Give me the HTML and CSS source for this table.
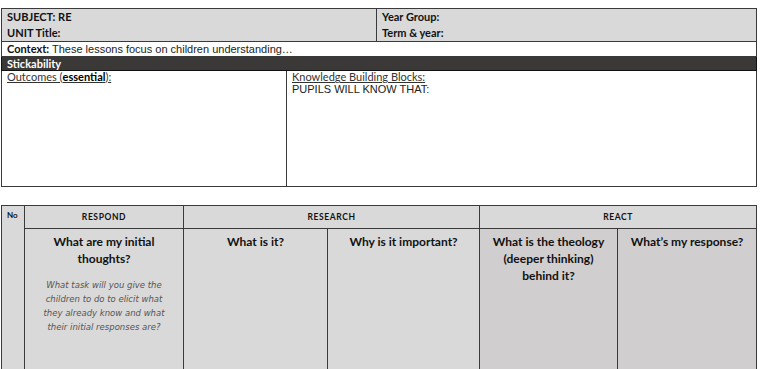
FILE: index.html
```html
<!DOCTYPE html>
<html>
<head>
<meta charset="utf-8">
<link rel="stylesheet" href="styles.css">
</head>
<body>
<div class="page">
  <table class="plan">
    <colgroup><col class="c-left"><col class="c-mid"><col class="c-right"></colgroup>
    <tr class="head-row">
      <td colspan="2" class="gt">
        <div class="b">SUBJECT: RE</div>
        <div class="b">UNIT Title:</div>
      </td>
      <td class="gt">
        <div class="b">Year Group:</div>
        <div class="b">Term &amp; year:</div>
      </td>
    </tr>
    <tr class="ctx-row">
      <td colspan="3"><span class="gb">Context:</span> <span class="ar">These lessons focus on children understanding…</span></td>
    </tr>
    <tr class="stick-row">
      <td colspan="3">Stickability</td>
    </tr>
    <tr class="out-row">
      <td class="outc"><span class="u">Outcomes (<b>essential</b>):</span></td>
      <td colspan="2" class="kbb"><span class="u">Knowledge Building Blocks:</span><br><span class="ar">PUPILS WILL KNOW THAT:</span></td>
    </tr>
  </table>

  <table class="grid">
    <colgroup>
      <col class="w-no"><col class="w-resp"><col class="w-what"><col class="w-why"><col class="w-theo"><col class="w-me">
    </colgroup>
    <tr class="ghead">
      <td rowspan="3" class="no">No</td>
      <td class="sec">RESPOND</td>
      <td colspan="2" class="sec">RESEARCH</td>
      <td colspan="2" class="sec">REACT</td>
    </tr>
    <tr class="gbody">
      <td class="q">
        <div class="qt">What are my initial thoughts?</div>
        <div class="hint">What task will you give the children to do to elicit what they already know and what their initial responses are?</div>
      </td>
      <td class="q"><div class="qt">What is it?</div></td>
      <td class="q"><div class="qt">Why is it important?</div></td>
      <td class="q dark"><div class="qt">What is the theology (deeper thinking) behind it?</div></td>
      <td class="q dark"><div class="qt">What’s my response?</div></td>
    </tr>
    <tr class="gnext">
      <td></td><td></td><td></td><td></td><td></td>
    </tr>
  </table>
</div>
</body>
</html>
```
FILE: styles.css
```css
html, body { margin: 0; padding: 0; background: #fff; }
body { font-family: "Lato", "DejaVu Sans", sans-serif; color: #111; }
.page { padding: 8px 4px 0 1px; }

table { border-collapse: collapse; table-layout: fixed; width: 755px; }
td { border: 1px solid #3a3a3a; padding: 0; vertical-align: top; }

.c-left { width: 285px; }
.c-mid { width: 90px; }
.c-right { width: 380px; }

.head-row td { background: #d9d9d9; height: 31px; padding: 0 5px; }
.b { font-weight: 700; font-size: 11px; line-height: 16px; }

.ctx-row td { height: 13px; padding: 0 5px; font-size: 11px; line-height: 13px; }
.gb { font-weight: 700; }
.ar { font-family: "Liberation Sans", Arial, sans-serif; font-weight: 400; font-size: 11px; color: #222; }

.stick-row td { background: #3b3838; color: #fff; font-weight: 700; font-size: 11px; line-height: 13px; height: 13px; padding: 0 5px; border-color: #111; }

.out-row td { height: 115px; padding: 0 5px; font-size: 11px; line-height: 12px; }
.u { text-decoration: underline; color: #333; }
.u b { color: #000; }
.kbb .ar { line-height: 12px; }

.grid { margin-top: 18px; }
.w-no { width: 23px; }
.w-resp { width: 159px; }
.w-what { width: 144px; }
.w-why { width: 152px; }
.w-theo { width: 138px; }
.w-me { width: 139px; }

.no { background: #d9d9d9; font-size: 8px; font-weight: 700; padding: 4px 0 0 5px; }
.ghead td.sec { background: #d9d9d9; height: 22px; text-align: center; vertical-align: middle; font-size: 8.5px; font-weight: 700; letter-spacing: 0.6px; }
.gbody td { background: #d9d9d9; height: 136px; text-align: center; padding: 4px 8px 0; }
.gbody td.dark { background: #d0cece; }
.qt { font-weight: 700; font-size: 12px; line-height: 17px; color: #111; }
.hint { margin-top: 11px; font-family: "DejaVu Sans", sans-serif; font-style: italic; font-size: 8.5px; line-height: 14px; color: #555; padding: 0 2px; }
.gnext td { height: 20px; background: #fff; }
```
